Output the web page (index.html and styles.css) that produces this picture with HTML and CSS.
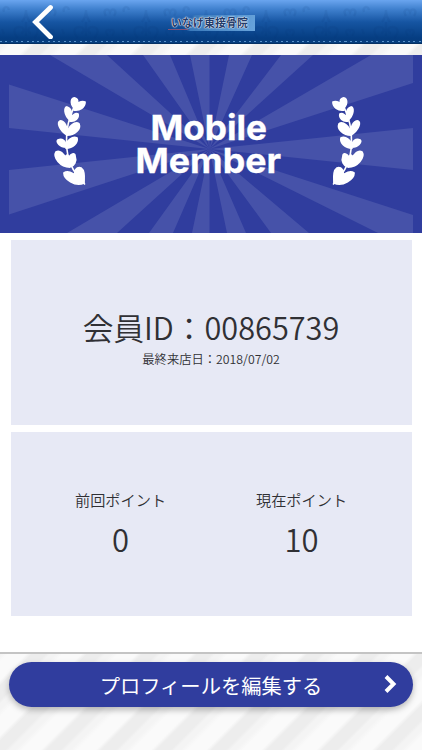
FILE: index.html
```html
<!DOCTYPE html>
<html lang="ja">
<head>
<meta charset="utf-8">
<meta name="viewport" content="width=device-width, initial-scale=1">
<title>会員証</title>
<link rel="stylesheet" href="styles.css">
</head>
<body>
<header class="bar">
  <svg class="damask" viewBox="0 0 422 42" width="422" height="42">
    <defs>
      <pattern id="damask" width="60" height="42" patternUnits="userSpaceOnUse">
        <path d="M18 38C12 32 14 27 20 27C24 27 25 32 21 33M34 38C40 32 38 27 32 27C28 27 27 32 31 33M26 36V22M22 22C26 17 26 12 26 10C26 12 26 17 30 22M48 36C44 31 48 28 50 31C52 28 56 31 52 36M46 16C42 10 48 7 50 12C52 7 58 10 54 16M4 12C2 7 8 5 9 10M4 34L2 29"/>
      </pattern>
    </defs>
    <rect width="422" height="42" fill="url(#damask)"/>
  </svg>
  <svg class="back" viewBox="0 0 24 38" aria-label="戻る"><path d="M19.500 6.500L4.500 21L19.500 36"/></svg>
  <div class="logo"><span>いなげ東接骨院</span><i></i></div>
</header>
<main class="page">
  <section class="hero">
    <svg viewBox="0 0 422 178" width="422" height="178">
      <g class="rays">
        <path d="M209.500 94L50 0H107ZM209.500 94L143 0H170ZM209.500 94L190 0H209.500ZM209.500 94L229 0H252ZM209.500 94L281 0H313ZM209.500 94L371 0H413V28ZM209.500 94L413 73V115ZM209.500 94L413 160V178H378ZM209.500 94L309 178H271ZM209.500 94L246 178H227ZM209.500 94V178H192ZM209.500 94L173 178H149ZM209.500 94L117 178H67ZM209.500 94L9 159.500V115ZM209.500 94L9 73V29.500Z"/>
      </g>
      <defs>
        <g id="laurel">
          <path class="stem" d="M74 52C69 64 66 73 66.500 88C67 104 71 115 85 129.500"/>
          <path d="M74 53C70 48 71 43 75 43C79 44 78 49 74 53ZM74 55C76 47 82 46 85 47C85 52 80 56 74 55ZM70 65C64 60 64 52 67 52C71 53 73 59 70 65ZM70 66C71 60 76 58 78 59C79 63 75 67 70 66ZM67 80C59 75 57 67 60 66C65 66 68 73 67 80ZM67 80C68 70 76 66 79 69C81 74 75 80 67 80ZM66 92C60 92 56 87 58 85C62 83 66 86 66 92ZM66 93C66 85 73 81 77 83C78 88 73 93 66 93ZM70 112C60 112 53 102 56 97C60 95 64 99 65 103C66 100 67 99 69 102C72 98 75 98 75 101C77 106 74 111 70 112ZM84 128C75 132 64 124 64 118C67 116 73 117 76 122C73 115 77 112 81 113C85 116 84 122 84 128Z"/>
        </g>
      </defs>
      <use href="#laurel" class="leaf"/>
      <use href="#laurel" class="leaf" transform="translate(418 0) scale(-1 1)"/>
      <g class="title">
        <text x="150.500" y="84.500" textLength="116.500" lengthAdjust="spacingAndGlyphs">Mobile</text>
        <text x="135.500" y="118" textLength="145.500" lengthAdjust="spacingAndGlyphs">Member</text>
      </g>
    </svg>
  </section>
  <section class="card member">
    <p class="id">会員ID：00865739</p>
    <p class="visit">最終来店日：2018/07/02</p>
  </section>
  <section class="card points">
    <div><p class="label">前回ポイント</p><p class="value">0</p></div>
    <div><p class="label">現在ポイント</p><p class="value">10</p></div>
  </section>
</main>
<footer class="foot">
  <button class="edit"><span>プロフィールを編集する</span>
    <svg viewBox="0 0 14 20"><path d="M3 2.500L10.500 10L3 17.500"/></svg>
  </button>
</footer>
</body>
</html>
```
FILE: styles.css
```css
* { box-sizing: border-box; }
body {
  margin: 0;
  height: 750px;
  overflow: hidden;
  display: flex;
  flex-direction: column;
  color: #303034;
  font-family: "Noto Sans CJK JP", sans-serif;
  font-weight: 350;
  background: repeating-linear-gradient(135deg, #fafafa 0 13px, #ededed 17px 27px, #f4f4f4 30px 34px, #fafafa 39px);
}
p { margin: 0; }
.bar {
  position: relative;
  height: 44px;
  flex: none;
  display: flex;
  background:
    repeating-linear-gradient(90deg, #5a93ca 0 2px, transparent 2px 5.300px) 0 41px / 100% 1px no-repeat,
    linear-gradient(#6aa5ef, #4081cf 9px, #1655a2 22px, #053d82 38px, #073e7d);
  border-bottom: 1px solid #053163;
}
.damask { position: absolute; left: 0; top: 0; }
.damask path { fill: none; stroke: #00286a; stroke-opacity: .08; stroke-width: 2.500; }
.back { position: relative; width: 24px; height: 38px; margin: 1px 0 0 31px; }
.back path { fill: none; stroke: #fff; stroke-width: 4.800; stroke-linecap: round; stroke-linejoin: miter; }
.logo {
  position: relative;
  width: 87px;
  height: 16px;
  margin: 15px 0 0 113px;
  background: linear-gradient(110deg, transparent 26%, #3979bb 30%, #68a4dc);
  font: 700 11px/14px "Noto Sans CJK JP", sans-serif;
  color: #243b69;
  white-space: nowrap;
  text-shadow: 0 0 1px #fff, 0 0 1px #fff, 0 0 2px #d4e5f6;
}
.logo span { display: block; padding-left: 3px; }
.logo i { display: block; width: 20px; height: 1px; background: #805479; }
.page { flex: none; height: 610px; padding-top: 11px; border-bottom: 2px solid #c4c4c4; background: linear-gradient(transparent 11px, #fff 11px); }
.hero { height: 178px; background: #303d9e; }
.hero svg { display: block; }
.rays { fill: #4652a9; }
.leaf { fill: #fff; stroke: #fff; stroke-width: 1.800; stroke-linejoin: round; }
.stem { fill: none; stroke: #fff; stroke-width: 1.600; }
.title { fill: #fff; stroke: #fff; stroke-width: .3; font: 700 34.500px Inter, sans-serif; }
.card { margin: 7px 10.500px 0; background: #e7e9f5; text-align: center; }
.member { height: 185px; padding-top: 64px; }
.id { font-size: 30.700px; line-height: 46px; }
.visit { font-size: 12.300px; line-height: 18px; }
.points { height: 184px; padding: 56px 19.500px 0; display: grid; grid-template-columns: 1fr 1fr; }
.label { font-size: 15.200px; line-height: 23px; }
.value { font-size: 31px; line-height: 48px; margin-top: 4px; }
.foot { padding: 8px 9px; }
.edit {
  position: relative;
  width: 404px;
  height: 45px;
  padding: 0;
  border: 0;
  border-radius: 23px;
  background: #303d9e;
  color: #fff;
  font: 20.300px/47px "Noto Sans CJK JP", sans-serif;
  box-shadow: 0 3px 6px #0004;
}
.edit svg { position: absolute; width: 14px; height: 20px; right: 16px; top: 12px; }
.edit path { fill: none; stroke: #fff; stroke-width: 4; }
```
